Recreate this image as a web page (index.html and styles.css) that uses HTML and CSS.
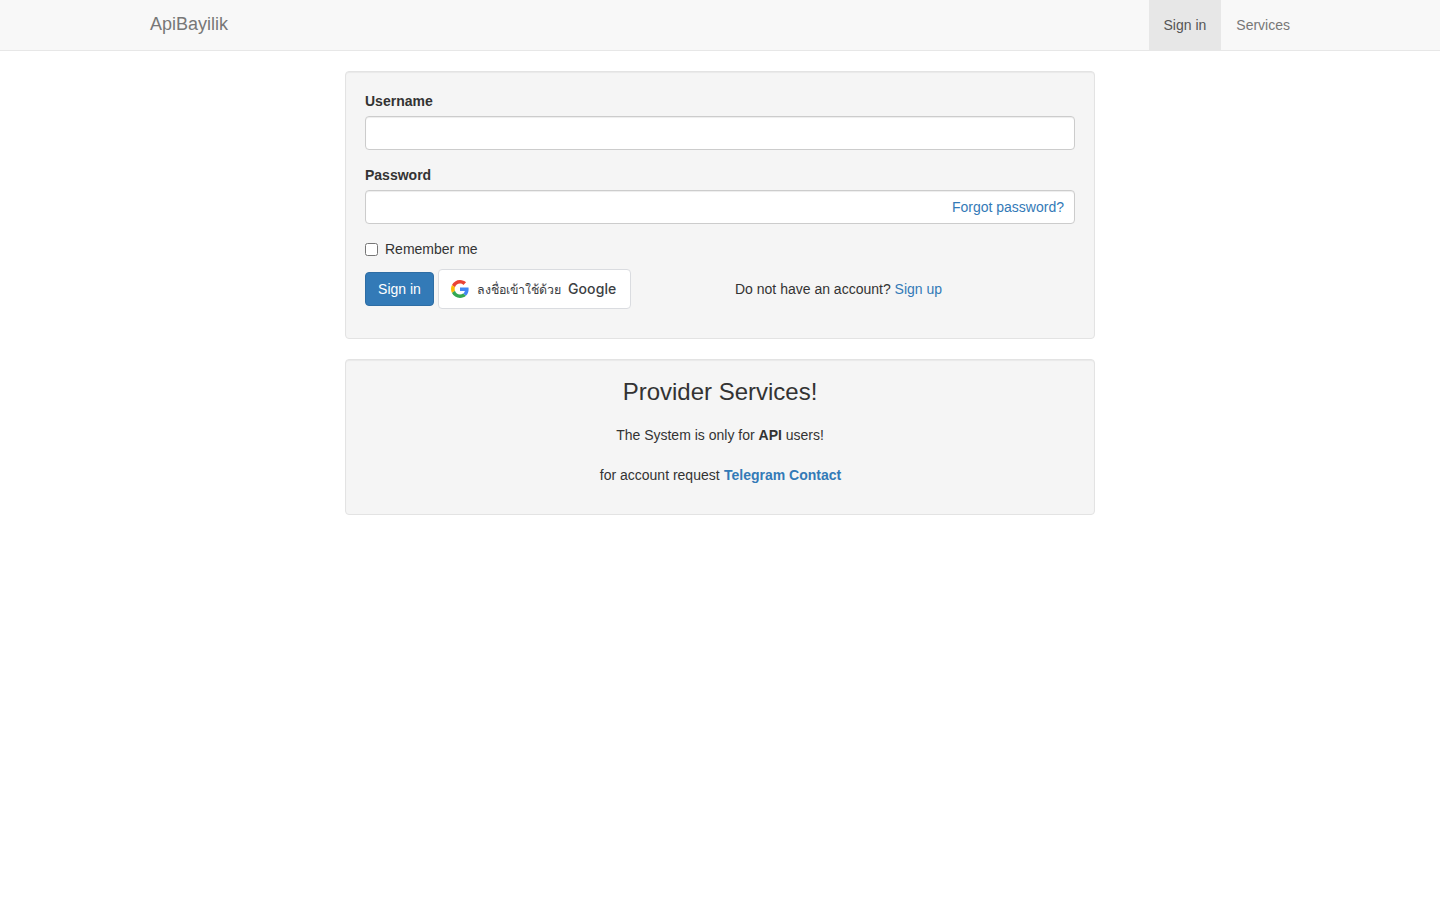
FILE: index.html
```html
<!DOCTYPE html>
<html lang="en">
<head>
<meta charset="utf-8">
<title>ApiBayilik</title>
<link rel="stylesheet" href="styles.css">
</head>
<body>
<nav class="navbar">
  <div class="nav-inner">
    <a class="brand" href="#">ApiBayilik</a>
    <ul class="nav-links">
      <li><a class="nav-link active" href="#">Sign in</a></li>
      <li><a class="nav-link" href="#">Services</a></li>
    </ul>
  </div>
</nav>
<main class="main">
  <form class="well">
    <div class="form-group">
      <label class="field-label" for="username">Username</label>
      <input class="form-control" id="username" type="text">
    </div>
    <div class="form-group">
      <label class="field-label" for="password">Password</label>
      <div class="password-wrap">
        <input class="form-control" id="password" type="password">
        <a class="forgot" href="#">Forgot password?</a>
      </div>
    </div>
    <label class="checkbox"><input class="check-input" type="checkbox">Remember me</label>
    <div class="actions">
      <button class="btn-primary" type="button">Sign in</button>
      <button class="btn-google" type="button">
        <svg class="g-icon" viewBox="0 0 48 48" width="18" height="18" aria-hidden="true">
          <path fill="#EA4335" d="M24 9.5c3.54 0 6.71 1.22 9.21 3.6l6.85-6.85C35.9 2.38 30.47 0 24 0 14.62 0 6.51 5.38 2.56 13.22l7.98 6.19C12.43 13.72 17.74 9.5 24 9.5z"/>
          <path fill="#4285F4" d="M46.98 24.55c0-1.57-.15-3.09-.38-4.55H24v9.02h12.94c-.58 2.96-2.26 5.48-4.78 7.18l7.73 6c4.51-4.18 7.09-10.36 7.09-17.65z"/>
          <path fill="#FBBC05" d="M10.53 28.59c-.48-1.45-.76-2.99-.76-4.59s.27-3.14.76-4.59l-7.98-6.19C.92 16.46 0 20.12 0 24c0 3.88.92 7.54 2.56 10.78l7.97-6.19z"/>
          <path fill="#34A853" d="M24 48c6.48 0 11.93-2.13 15.89-5.81l-7.73-6c-2.15 1.45-4.92 2.3-8.16 2.3-6.26 0-11.57-4.22-13.47-9.91l-7.98 6.19C6.51 42.62 14.62 48 24 48z"/>
        </svg>
        <span class="g-text"><span class="g-thai">ลงชื่อเข้าใช้ด้วย</span><span class="g-latin">Google</span></span>
      </button>
      <p class="signup">Do not have an account? <a href="#">Sign up</a></p>
    </div>
  </form>
  <section class="well well-center">
    <h3 class="title">Provider Services!</h3>
    <p class="info">The System is only for <b>API</b> users!</p>
    <p class="info info-last">for account request <a class="contact" href="#">Telegram Contact</a></p>
  </section>
</main>
</body>
</html>
```
FILE: styles.css
```css
* { box-sizing: border-box; }
html, body { margin: 0; padding: 0; }
body {
  font-family: "Liberation Sans", Arial, sans-serif;
  font-size: 14px;
  line-height: 20px;
  color: #333;
  background: #fff;
}
a { color: #337ab7; text-decoration: none; }

.navbar {
  height: 51px;
  background: #f8f8f8;
  border-bottom: 1px solid #e7e7e7;
  margin-bottom: 20px;
}
.nav-inner {
  width: 1170px;
  margin: 0 auto;
  display: flex;
  justify-content: space-between;
}
.brand {
  padding: 14px 15px 16px;
  font-size: 18px;
  line-height: 20px;
  height: 50px;
  color: #777;
}
.nav-links { display: flex; list-style: none; margin: 0; padding: 0; }
.nav-link { display: block; padding: 15px; height: 50px; color: #777; }
.nav-link.active { background: #e7e7e7; color: #555; }

.main { width: 750px; margin: 0 auto; }
.well {
  display: block;
  padding: 19px;
  margin-bottom: 20px;
  background: #f5f5f5;
  border: 1px solid #e3e3e3;
  border-radius: 4px;
  box-shadow: inset 0 1px 1px rgba(0, 0, 0, .05);
}
.well-center { text-align: center; }

.form-group { margin-bottom: 15px; }
.field-label { display: block; font-weight: 700; margin-bottom: 5px; }
.form-control {
  display: block;
  width: 100%;
  height: 34px;
  padding: 6px 12px;
  font: inherit;
  color: #555;
  background: #fff;
  border: 1px solid #ccc;
  border-radius: 4px;
  box-shadow: inset 0 1px 1px rgba(0, 0, 0, .075);
}
.password-wrap { position: relative; }
.forgot { position: absolute; top: 7px; right: 11px; }

.checkbox {
  display: flex;
  align-items: center;
  height: 20px;
  margin-bottom: 10px;
  font-weight: 400;
}
.check-input { width: 13px; height: 13px; margin: 0 7px 0 0; }

.actions { display: flex; align-items: center; margin-bottom: 10px; height: 40px; }
.btn-primary {
  height: 34px;
  width: 69px;
  padding: 6px 0;
  font: inherit;
  color: #fff;
  background: #337ab7;
  border: 1px solid #2e6da4;
  border-radius: 4px;
}
.btn-google {
  display: flex;
  align-items: center;
  gap: 8px;
  width: 193px;
  height: 40px;
  margin-left: 4px;
  padding: 0 12px;
  color: #3c4043;
  background: #fff;
  border: 1px solid #dadce0;
  border-radius: 4px;
  font-family: "Noto Sans", Roboto, sans-serif;
  font-size: 14px;
  white-space: nowrap;
}
.g-icon { flex: none; }
.g-thai { font-size: 12.4px; font-weight: 500; }
.g-latin { font-family: Inter, sans-serif; font-size: 14px; font-weight: 500; letter-spacing: .1px; margin-left: 7px; }
.signup { margin: 0 0 0 104px; }

.title {
  margin: 0 0 20px;
  font-size: 24px;
  font-weight: 500;
  line-height: 26.4px;
}
.info { margin: 0 0 20px; }
.info-last { margin-bottom: 10px; padding-left: 1px; }
.contact { font-weight: 700; margin-left: .5px; }
```
